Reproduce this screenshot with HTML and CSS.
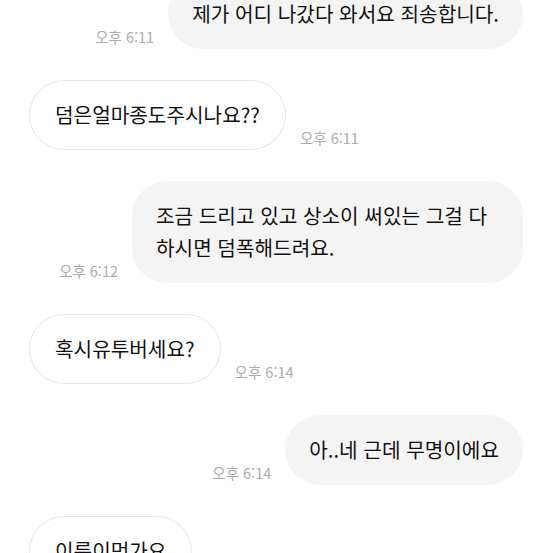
FILE: index.html
```html
<!DOCTYPE html>
<html lang="ko">
<head>
    <meta charset="UTF-8">
    <meta name="viewport" content="width=device-width, initial-scale=1.0">
    <title>채팅</title>
    <link rel="stylesheet" href="styles.css">
</head>
<body>

    <div class="chat">
        <div class="row me">
            <span class="time">오후 6:11</span>
            <div class="bubble">제가 어디 나갔다 와서요 죄송합니다.</div>
        </div>

        <div class="row other">
            <div class="bubble">덤은얼마종도주시나요??</div>
            <span class="time">오후 6:11</span>
        </div>

        <div class="row me">
            <span class="time">오후 6:12</span>
            <div class="bubble">조금 드리고 있고 상소이 써있는 그걸 다 하시면 덤폭해드려요.</div>
        </div>

        <div class="row other">
            <div class="bubble">혹시유투버세요?</div>
            <span class="time">오후 6:14</span>
        </div>

        <div class="row me">
            <span class="time">오후 6:14</span>
            <div class="bubble">아..네 근데 무명이에요</div>
        </div>

        <div class="row other">
            <div class="bubble">이름이먼가요</div>
        </div>
    </div>

</body>
</html>
```

FILE: styles.css
```css
html, body {
    margin: 0;
    height: 100%;
    overflow: hidden;
    background-color: #fff;
}
body {
    color: #111;
    font-family: "Noto Sans CJK KR", "Noto Sans", sans-serif;
}
.chat {
    display: flex;
    flex-direction: column;
    gap: 31px;
    margin-top: -21px;
    padding: 0 30px 0 29px;
}
.row {
    display: flex;
    align-items: flex-end;
    gap: 14px;
}
.row.me {
    justify-content: flex-end;
}
.bubble {
    max-width: 343px;
    padding: 19px 24px;
    border-radius: 35px;
    font-size: 20.2px;
    line-height: 32px;
    word-break: keep-all;
}
.me .bubble {
    background-color: #f4f4f4;
}
.other .bubble {
    border: 1px solid #e6e6e6;
    padding: 18px 25px;
    background-color: #fff;
}
.time {
    margin-bottom: 4px;
    font-size: 14.5px;
    line-height: 17px;
    color: #ababab;
    white-space: nowrap;
}
```
